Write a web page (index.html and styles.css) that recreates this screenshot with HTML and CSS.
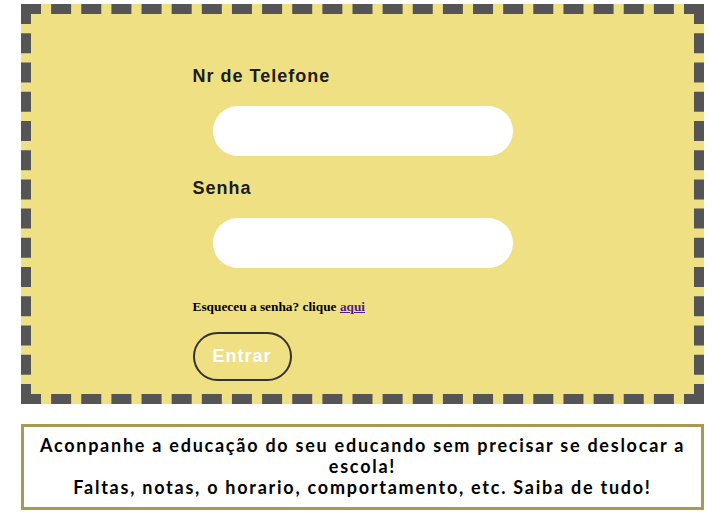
FILE: index.html
```html
<!DOCTYPE html>
<html lang="pt">
<head>
<meta charset="utf-8">
<title>Login</title>
<link rel="stylesheet" href="styles.css">
</head>
<body>
<div class="page">
  <div class="card">
    <form class="form">
      <label class="label" for="tel">Nr de Telefone</label>
      <input class="field" id="tel" type="text">
      <label class="label label-second" for="pw">Senha</label>
      <input class="field" id="pw" type="password">
      <p class="forgot">Esqueceu a senha? clique <a class="link" href="#">aqui</a></p>
      <button class="btn" type="button">Entrar</button>
    </form>
  </div>
  <div class="info">
    <p class="info-text">Aconpanhe a educação do seu educando sem precisar se deslocar a escola!<br>Faltas, notas, o horario, comportamento, etc. Saiba de tudo!</p>
  </div>
</div>
</body>
</html>
```

FILE: styles.css
```css
html, body {
  margin: 0;
  padding: 0;
  background: #ffffff;
}

.page {
  padding: 4px 8px 0 21px;
  width: 683px;
  display: flex;
  flex-direction: column;
  gap: 20px;
}

.card {
  box-sizing: border-box;
  width: 683px;
  background: #f0e084;
  border: 10px dashed #555555;
  padding: 52px 0 13px;
}

.form {
  width: 340px;
  margin: 0 auto;
  display: flex;
  flex-direction: column;
  align-items: flex-start;
}

.label {
  font-family: "Liberation Sans", Arial, sans-serif;
  font-weight: bold;
  font-size: 18px;
  line-height: 20px;
  letter-spacing: 1px;
  color: #1c1c1c;
  margin-bottom: 20px;
}

.label-second {
  margin-top: 22px;
}

.field {
  box-sizing: border-box;
  width: 300px;
  height: 50px;
  border: none;
  border-radius: 25px;
  background: #ffffff;
  margin: 0 0 0 20px;
  padding: 0 20px;
  outline: none;
}

.forgot {
  margin: 31px 0 18px;
  font-family: "Liberation Serif", "Times New Roman", serif;
  font-weight: bold;
  font-size: 13.33px;
  line-height: 15px;
  color: #000000;
}

.link {
  color: #551a8b;
}

.btn {
  box-sizing: border-box;
  height: 49px;
  padding: 0 18px;
  border: 2px solid #333333;
  border-radius: 25px;
  background: transparent;
  color: #ffffff;
  font-family: "Liberation Sans", Arial, sans-serif;
  font-weight: bold;
  font-size: 18px;
  letter-spacing: 1px;
}

.info {
  box-sizing: border-box;
  width: 683px;
  border: 3px solid #a69a55;
  padding: 8px 10px 9px;
}

.info-text {
  margin: 0;
  text-align: center;
  font-family: Lato, "Open Sans", sans-serif;
  font-weight: bold;
  font-size: 18px;
  line-height: 21px;
  letter-spacing: 1.75px;
  color: #000000;
}
```
